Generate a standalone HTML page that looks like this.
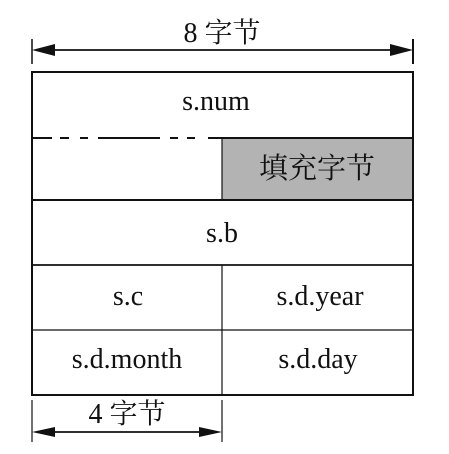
<!DOCTYPE html>
<html><head><meta charset="utf-8"><style>
html,body{margin:0;padding:0;background:#fff;width:449px;height:454px;overflow:hidden}
svg{display:block}
text{font-family:"Liberation Serif","Noto Serif CJK SC","Noto Sans CJK SC",serif;fill:#111}
</style></head><body>
<svg width="449" height="454" viewBox="0 0 449 454">
<rect x="222" y="137" width="191" height="63" fill="#b3b3b3"/>
<g stroke="#111" fill="none">
<line x1="32" y1="39" x2="32" y2="64" stroke-width="1.5"/>
<line x1="413" y1="39" x2="413" y2="64" stroke-width="2"/>
<line x1="50" y1="50" x2="395" y2="50" stroke-width="1.8"/>
<rect x="32" y="72" width="381" height="323" stroke-width="2"/>
<line x1="222" y1="138" x2="413" y2="138" stroke-width="2"/>
<line x1="32" y1="200" x2="413" y2="200" stroke-width="2"/>
<line x1="32" y1="265" x2="413" y2="265" stroke-width="1.8"/>
<line x1="32" y1="330" x2="413" y2="330" stroke-width="1.2"/>
<line x1="222" y1="138" x2="222" y2="200" stroke-width="1.2"/>
<line x1="222" y1="265" x2="222" y2="395" stroke-width="1.2"/>
<g stroke-width="2">
<line x1="32" y1="138" x2="52" y2="138"/>
<line x1="60" y1="138" x2="69" y2="138"/>
<line x1="80" y1="138" x2="88" y2="138"/>
<line x1="98" y1="138" x2="160" y2="138"/>
<line x1="170" y1="138" x2="178" y2="138"/>
<line x1="187" y1="138" x2="195" y2="138"/>
<line x1="208" y1="138" x2="222" y2="138"/>
</g>
<line x1="32" y1="400" x2="32" y2="442" stroke-width="1.2"/>
<line x1="222" y1="400" x2="222" y2="442" stroke-width="1.2"/>
<line x1="50" y1="432" x2="204" y2="432" stroke-width="1.8"/>
</g>
<g fill="#111">
<polygon points="32,50 55,44 55,56"/>
<polygon points="413,50 390,44 390,56"/>
<polygon points="32,432 55,427 55,437"/>
<polygon points="222,432 199,427 199,437"/>
</g>
<g font-size="28" text-anchor="middle">
<text x="222" y="42">8 字节</text>
<text x="216" y="110">s.num</text>
<text x="317" y="178" font-size="29">填充字节</text>
<text x="222" y="242">s.b</text>
<text x="128" y="305">s.c</text>
<text x="320" y="305">s.d.year</text>
<text x="127" y="368">s.d.month</text>
<text x="318" y="368">s.d.day</text>
<text x="127" y="423">4 字节</text>
</g>
</svg>
</body></html>
